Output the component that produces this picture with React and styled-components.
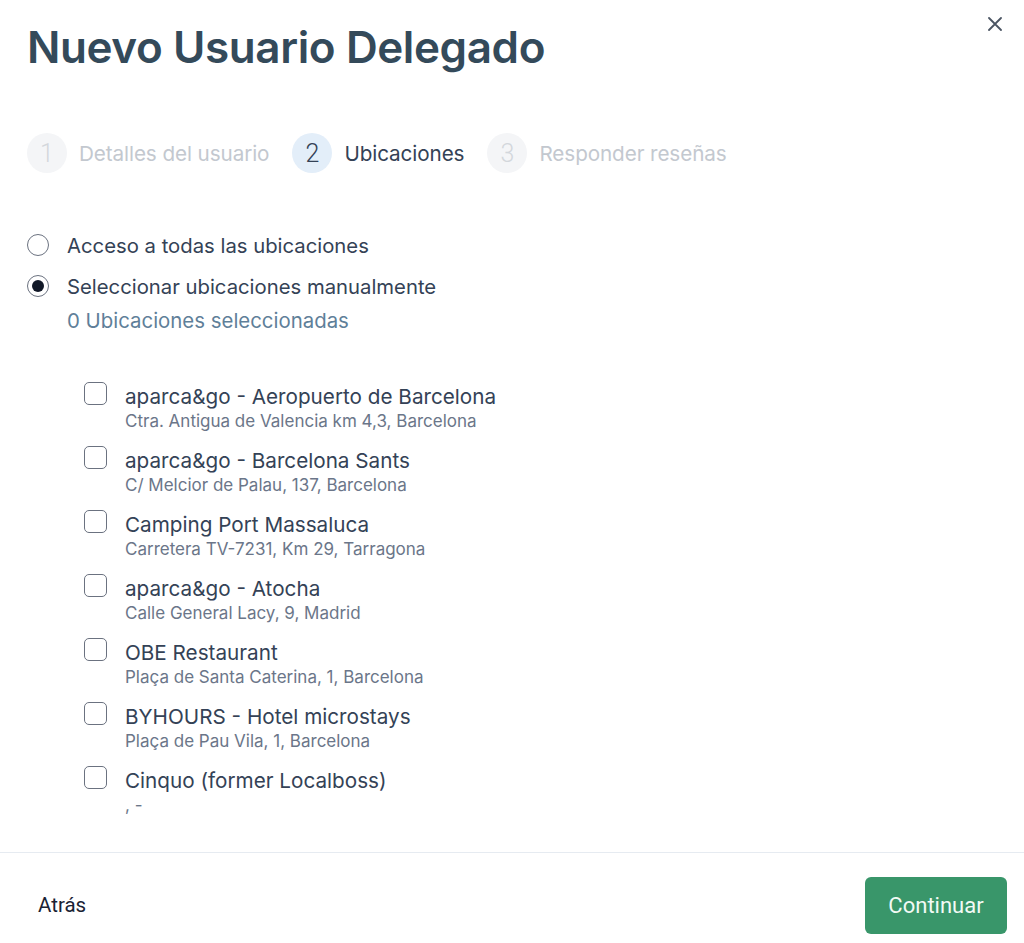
import React from "react";
import styled, { createGlobalStyle } from "styled-components";

const Global = createGlobalStyle`
  html, body { margin: 0; padding: 0; background: #fff; }
  body { font-family: Inter, "Noto Sans", sans-serif; -webkit-font-smoothing: antialiased; }
  * { box-sizing: border-box; }
`;

const Modal = styled.div`
  width: 1024px;
  height: 943px;
  display: flex;
  flex-direction: column;
  background: #fff;
  overflow: hidden;
`;

const Header = styled.div`
  display: flex;
  justify-content: space-between;
  align-items: flex-start;
  padding: 23px 20px 0 27px;
`;

const Title = styled.h1`
  margin: 0;
  font-size: 44px;
  line-height: 48px;
  font-weight: 600;
  color: #344a5a;
  letter-spacing: -0.4px;
`;

const CloseButton = styled.button`
  border: none;
  background: none;
  padding: 0;
  width: 18px;
  height: 18px;
  margin-top: -8px;
  display: flex;
  align-items: center;
  justify-content: center;
  color: #4b5563;
  cursor: pointer;
`;

const Body = styled.div`
  flex: 1;
  overflow: hidden;
  padding: 0 28px 0 27px;
`;

const Stepper = styled.div`
  display: flex;
  align-items: center;
  gap: 23px;
  margin-top: 62px;
`;

const Step = styled.div`
  display: flex;
  align-items: center;
  gap: 12px;
`;

const StepCircle = styled.div`
  width: 40px;
  height: 40px;
  border-radius: 50%;
  display: flex;
  align-items: center;
  justify-content: center;
  font-family: Roboto, sans-serif;
  font-weight: 300;
  font-size: 25px;
  background: ${(p) => (p.$active ? "#e3eef9" : "#f4f5f7")};
  color: ${(p) => (p.$active ? "#344256" : "#d3d7dc")};
`;

const StepLabel = styled.span`
  font-size: 20.7px;
  color: ${(p) => (p.$active ? "#344256" : "#c3c8cf")};
  letter-spacing: -0.1px;
`;

const RadioGroup = styled.div`
  display: flex;
  flex-direction: column;
  gap: 11px;
  margin-top: 57px;
`;

const RadioRow = styled.label`
  display: flex;
  align-items: center;
  gap: 18px;
  height: 30px;
  font-size: 20.3px;
  color: #344256;
  cursor: pointer;
`;

const RadioCircle = styled.span`
  width: 22px;
  height: 22px;
  border-radius: 50%;
  border: 1.5px solid #6b7280;
  display: flex;
  align-items: center;
  justify-content: center;
  flex-shrink: 0;
  &::after {
    content: "";
    width: 12px;
    height: 12px;
    border-radius: 50%;
    background: #111827;
    display: ${(p) => (p.$checked ? "block" : "none")};
  }
`;

const SelectedCount = styled.div`
  margin: 8px 0 0 40px;
  font-size: 20.4px;
  line-height: 24px;
  color: #5f7f99;
`;

const LocationList = styled.ul`
  list-style: none;
  margin: 51px 0 0;
  padding: 0 0 0 57px;
  display: flex;
  flex-direction: column;
  gap: 16px;
`;

const LocationItem = styled.li`
  display: flex;
  align-items: flex-start;
  gap: 18px;
`;

const Checkbox = styled.span`
  width: 23px;
  height: 23px;
  border: 1.5px solid #6b7280;
  border-radius: 5px;
  flex-shrink: 0;
  margin-top: -2px;
`;

const LocationText = styled.div`
  display: flex;
  flex-direction: column;
`;

const LocationName = styled.span`
  font-size: 20.7px;
  line-height: 26px;
  color: #344256;
`;

const LocationAddress = styled.span`
  font-size: 17px;
  line-height: 22px;
  color: #6b7689;
`;

const Footer = styled.div`
  height: 91px;
  flex-shrink: 0;
  border-top: 1.5px solid #e6ebf1;
  display: flex;
  align-items: center;
  justify-content: space-between;
  padding: 14px 17px 0 38px;
`;

const BackButton = styled.button`
  border: none;
  background: none;
  padding: 0;
  font-family: Roboto, sans-serif;
  font-size: 20.5px;
  color: #1a2233;
  cursor: pointer;
`;

const PrimaryButton = styled.button`
  border: none;
  border-radius: 6px;
  background: #39966a;
  color: #f2faf5;
  font-family: Roboto, sans-serif;
  font-size: 22px;
  width: 142px;
  height: 57px;
  cursor: pointer;
`;

const locations = [
  ["aparca&go - Aeropuerto de Barcelona", "Ctra. Antigua de Valencia km 4,3, Barcelona"],
  ["aparca&go - Barcelona Sants", "C/ Melcior de Palau, 137, Barcelona"],
  ["Camping Port Massaluca", "Carretera TV-7231, Km 29, Tarragona"],
  ["aparca&go - Atocha", "Calle General Lacy, 9, Madrid"],
  ["OBE Restaurant", "Plaça de Santa Caterina, 1, Barcelona"],
  ["BYHOURS - Hotel microstays", "Plaça de Pau Vila, 1, Barcelona"],
  ["Cinquo (former Localboss)", ", -"],
];

const steps = [
  ["1", "Detalles del usuario", false],
  ["2", "Ubicaciones", true],
  ["3", "Responder reseñas", false],
];

export default function App() {
  return (
    <>
      <Global />
      <Modal>
        <Header>
          <Title>Nuevo Usuario Delegado</Title>
          <CloseButton aria-label="Cerrar">
            <svg width="14" height="14" viewBox="0 0 14 14" fill="none" stroke="currentColor" strokeWidth="1.8" strokeLinecap="round">
              <path d="M1 1L13 13M13 1L1 13" />
            </svg>
          </CloseButton>
        </Header>
        <Body>
          <Stepper>
            {steps.map(([n, label, active]) => (
              <Step key={n}>
                <StepCircle $active={active}>{n}</StepCircle>
                <StepLabel $active={active}>{label}</StepLabel>
              </Step>
            ))}
          </Stepper>
          <RadioGroup>
            <RadioRow>
              <RadioCircle />
              Acceso a todas las ubicaciones
            </RadioRow>
            <RadioRow>
              <RadioCircle $checked />
              Seleccionar ubicaciones manualmente
            </RadioRow>
          </RadioGroup>
          <SelectedCount>0 Ubicaciones seleccionadas</SelectedCount>
          <LocationList>
            {locations.map(([name, addr]) => (
              <LocationItem key={name}>
                <Checkbox />
                <LocationText>
                  <LocationName>{name}</LocationName>
                  <LocationAddress>{addr}</LocationAddress>
                </LocationText>
              </LocationItem>
            ))}
          </LocationList>
        </Body>
        <Footer>
          <BackButton>Atrás</BackButton>
          <PrimaryButton>Continuar</PrimaryButton>
        </Footer>
      </Modal>
    </>
  );
}
